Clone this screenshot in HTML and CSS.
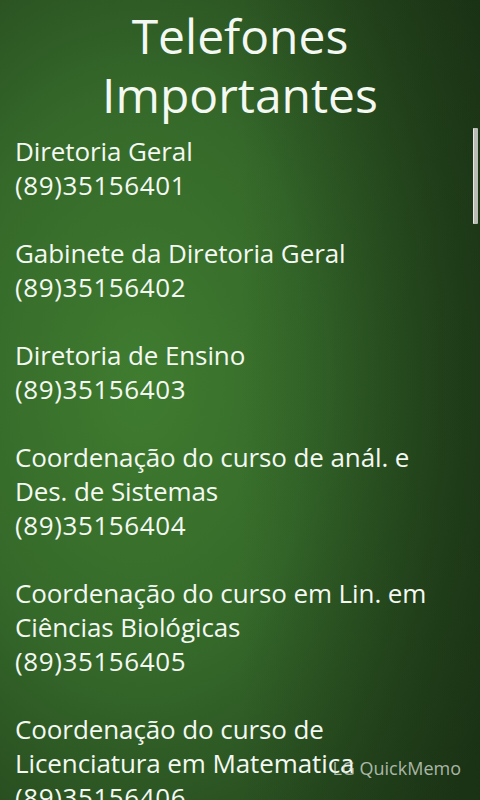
FILE: index.html
```html
<!DOCTYPE html>
<html>
  <head>
    <meta charset="UTF-8">
    <meta name="viewport" content="width=device-width, initial-scale=1.0">
    <title>Telefones Importantes</title>
    <link rel="stylesheet" href="styles.css">
  </head>
  <body>
    <div class="screen">
      <h1 class="title">Telefones Importantes</h1>

      <div class="list">
        <p class="item">Diretoria Geral<br><span class="phone">(89)35156401</span></p>
        <p class="item">Gabinete da Diretoria Geral<br><span class="phone">(89)35156402</span></p>
        <p class="item">Diretoria de Ensino<br><span class="phone">(89)35156403</span></p>
        <p class="item">Coordenação do curso de anál. e Des. de Sistemas<br><span class="phone">(89)35156404</span></p>
        <p class="item">Coordenação do curso em Lin. em Ciências Biológicas<br><span class="phone">(89)35156405</span></p>
        <p class="item">Coordenação do curso de Licenciatura em Matematica<br><span class="phone">(89)35156406</span></p>
      </div>

      <div class="scrollbar"></div>
      <div class="memo">LG QuickMemo</div>
    </div>
  </body>
</html>
```

FILE: styles.css
```css
html, body {
    margin: 0;
    height: 100%;
    overflow: hidden;
}

body {
    font-family: "Open Sans", "Noto Sans", sans-serif;
    color: #f4f8f2;
    background-color: #2a5220;
    background-image:
        linear-gradient(to right, rgba(20, 40, 16, 0) 50%, rgba(20, 40, 16, 0.5) 100%),
        radial-gradient(ellipse 420px 620px at 140px 380px, #3f7c2f 0%, #35692a 45%, #274b1f 80%, #203d19 100%);
}

.screen {
    position: relative;
    height: 800px;
    overflow: hidden;
}

.title {
    margin: 0;
    padding-top: 6px;
    font-size: 48px;
    font-weight: normal;
    line-height: 59px;
    text-align: center;
}

.list {
    padding: 10px 22px 0 15px;
}

.item {
    margin: 0 0 34px;
    font-size: 26px;
    line-height: 34px;
    letter-spacing: -0.1px;
}

.phone {
    letter-spacing: 0.6px;
}

.scrollbar {
    position: absolute;
    top: 128px;
    right: 2px;
    width: 4px;
    height: 96px;
    background: #b9bdb6;
    border-left: 1px solid #e6e8e4;
    border-radius: 1px;
}

.memo {
    position: absolute;
    right: 19px;
    top: 756px;
    font-size: 18px;
    color: rgba(220, 224, 218, 0.75);
}
```
